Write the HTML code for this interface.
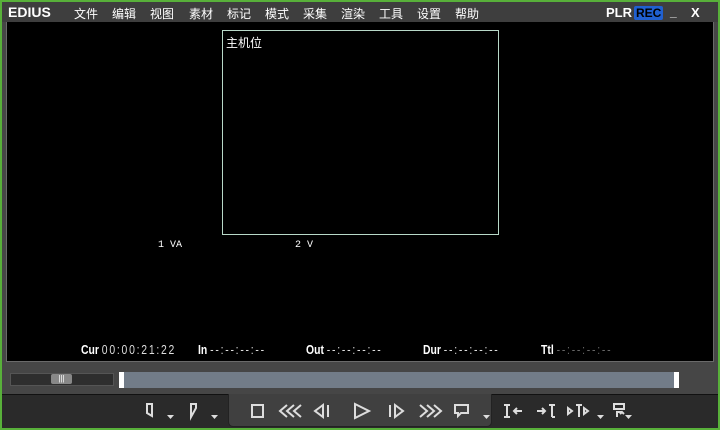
<!DOCTYPE html>
<html><head><meta charset="utf-8"><style>
*{margin:0;padding:0;box-sizing:border-box}
body{width:720px;height:430px;background:#58b03a;position:relative;overflow:hidden;font-family:"Liberation Sans","Noto Sans CJK SC",sans-serif}
.win{position:absolute;left:2px;top:2px;right:2px;bottom:2px;background:#464646}
.title{position:absolute;left:0;top:0;width:716px;height:20px;color:#fff;font-size:12px;background:#3e3e3e}
.title span{position:absolute;top:3px}
.vid{position:absolute;left:4px;top:20px;width:708px;height:340px;background:#000;border:1px solid #6a6a6a;border-top:none}
.frame{position:absolute;left:215px;top:8px;width:277px;height:205px;border:1px solid #b8d8c8}
.mono{position:absolute;color:#fff;font-family:"Liberation Mono",monospace;font-size:10px}
.tc{position:absolute;top:320px;color:#fff;font-size:13px;font-weight:bold;transform:scaleX(.8);transform-origin:left;white-space:nowrap}
.tc i{font-style:normal;font-weight:normal;color:#ddd;letter-spacing:2.2px}
.bot{position:absolute;left:0;top:392px;width:716px;height:34px;background:#2a2a2a;border-top:1px solid #111}
.tab{position:absolute;left:226px;top:392px;width:264px;height:33px;background:#404040;border-radius:0 0 5px 5px;border:1px solid #222;border-top:none}
svg{position:absolute;top:0;left:0}
</style></head><body>
<div class="win">
<div class="title">
<span style="left:6px;font-weight:bold;font-size:14px;top:2px">EDIUS</span>
<span style="left:72px">文件</span><span style="left:110px">编辑</span><span style="left:148px">视图</span><span style="left:187px">素材</span><span style="left:225px">标记</span><span style="left:263px">模式</span><span style="left:301px">采集</span><span style="left:339px">渲染</span><span style="left:377px">工具</span><span style="left:415px">设置</span><span style="left:453px">帮助</span>
<span style="left:604px;font-weight:bold;font-size:13px;top:3px">PLR</span>
<span style="left:632px;font-weight:bold;font-size:12px;background:#2060d0;color:#000;padding:0 2px;border-radius:2px;top:4px">REC</span>
<span style="left:668px;font-weight:bold">_</span><span style="left:689px;font-weight:bold;font-size:13px">X</span>
</div>
<div class="vid">
<div class="frame"><span style="position:absolute;left:3px;top:3px;color:#fff;font-size:12px;font-family:'Noto Sans CJK SC',sans-serif">主机位</span></div>
<span class="mono" style="left:151px;top:218px">1 VA</span>
<span class="mono" style="left:288px;top:218px">2 V</span>
<span class="tc" style="left:74px">Cur <i>00:00:21:22</i></span>
<span class="tc" style="left:191px">In <i>--:--:--:--</i></span>
<span class="tc" style="left:299px">Out <i>--:--:--:--</i></span>
<span class="tc" style="left:416px">Dur <i>--:--:--:--</i></span>
<span class="tc" style="left:534px">Ttl <i style="color:#666">--:--:--:--</i></span>
</div>
<div style="position:absolute;left:8px;top:371px;width:104px;height:13px;background:#2e2e2e;border:1px solid #555"></div>
<div style="position:absolute;left:49px;top:372px;width:21px;height:10px;background:#888;border-radius:2px;color:#fff;font-size:8px;text-align:center;line-height:10px">|||</div>
<div style="position:absolute;left:117px;top:370px;width:560px;height:16px;background:#727c88;border-left:5px solid #fff;border-right:5px solid #fff"></div>
<div class="bot"></div>
<div class="tab"></div>
</div>
<svg width="720" height="430" fill="none" stroke="#ddd" stroke-width="2">
<path d="M147 404h5v12l-5-3z"/><path d="M191 404h5v4l-5 9z"/>
<path d="M252 405h11v12h-11z"/>
<path d="M287 405l-7 6 7 6M294 405l-7 6 7 6M301 405l-7 6 7 6"/>
<path d="M323 405l-8 6 8 6zM328 405v12"/>
<path d="M355 404l14 7-14 7z"/>
<path d="M390 405v12M395 405l8 6-8 6z"/>
<path d="M420 405l7 6-7 6M427 405l7 6-7 6M434 405l7 6-7 6"/>
<path d="M455 405h13v8h-7l-3 3v-3h-3z"/>
<path d="M504 405h3v12h-3M510 405h-3M510 417h-3M514 411h8M517 408l-3 3 3 3"/>
<path d="M537 411h8M542 408l3 3-3 3M549 405h3v12M555 405h-3M555 417h-3"/>
<path d="M568 408l4 3-4 3zM576 405h6M579 405v12M584 408l4 3-4 3z"/>
<path d="M614 404h10v5h-10zM617 417v-5h5M620 414l2-2 2 2"/>
</svg>
<svg width="720" height="430" fill="#ddd" stroke="none">
<path d="M167 415h7l-3.5 4z"/><path d="M211 415h7l-3.5 4z"/><path d="M483 415h7l-3.5 4z"/><path d="M597 415h7l-3.5 4z"/><path d="M625 415h7l-3.5 4z"/>
</svg>
</body></html>
